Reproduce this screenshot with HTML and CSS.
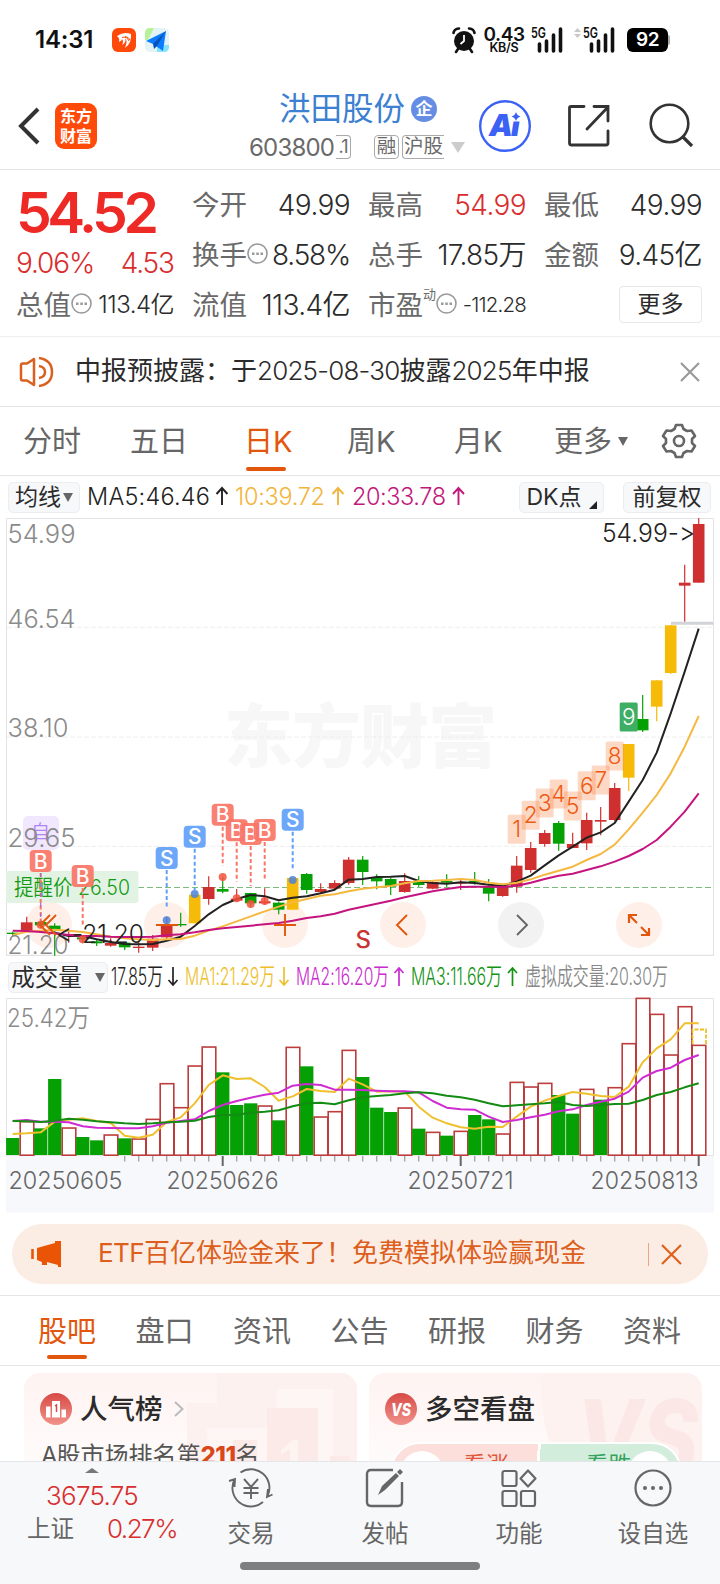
FILE: index.html
```html
<!DOCTYPE html>
<html lang="zh-CN">
<head>
<meta charset="utf-8">
<title>洪田股份 603800</title>
<link rel="stylesheet" href="styles.css">
</head>
<body>
<div class="app">
<main class="page">
  <header class="status">
    <span class="clock">14:31</span>
    <svg class="app-badge" width="24" height="24" viewBox="0 0 24 24"><rect width="24" height="24" rx="6" fill="#ff4a0a"/><path d="M5 8Q12 3 19 6Q20 15 13 20Q16 12 13 10Q15 14 10 17Q12 13 10 11Q10 13 7 14Q8 10 5 8Z" fill="#fff"/><path d="M10 9.500Q15 8 17 13M13 8.500Q17 9 18 12" stroke="#ff4a0a" fill="none"/></svg>
    <svg class="plane" width="24" height="24" viewBox="0 0 24 24"><rect width="24" height="24" rx="5" fill="#e4f3f5"/><path d="M5 0H9L3 12H0V5Q0 0 5 0Z" fill="#b7f29a"/><path d="M12 17H24V19Q24 24 19 24H12Z" fill="#86e3ff"/><path d="M21 3L1 13L8 16L18 23Z" fill="#0a7dff"/><path d="M21 3L8 16L9 21L12 18Z" fill="#0551bb"/></svg>
    <span class="status-right">
      <svg class="alarm" width="24" height="26" viewBox="0 0 24 26"><circle cx="12" cy="14" r="10" fill="#111"/><path d="M1.500 6Q2 2 7 1.500M22.500 6Q22 2 17 1.500M6 22L4 25M18 22L20 25" stroke="#111" stroke-width="2.600" fill="none" stroke-linecap="round"/><path d="M12 8V14L8.500 17" stroke="#fff" stroke-width="1.800" fill="none"/></svg>
      <span class="speed"><b>0.43</b><i>KB/S</i></span>
      <svg class="signal" width="32" height="26" viewBox="0 0 32 26"><text x="0" y="11" class="g5" textLength="15" lengthAdjust="spacingAndGlyphs">5G</text><path d="M8.500 17V24M15.500 14V24M22.500 8V24M29.500 2V24" stroke="#111" stroke-width="3.600" stroke-linecap="round"/></svg>
      <svg class="signal two" width="42" height="26" viewBox="-10 0 42 26"><path d="M-9 5L-5.500 1L-2 5ZM-9 7L-5.500 11L-2 7Z" fill="#c8c8c8"/><text x="0" y="11" class="g5" textLength="15" lengthAdjust="spacingAndGlyphs">5G</text><path d="M8.500 17V24M15.500 14V24M22.500 8V24M29.500 2V24" stroke="#111" stroke-width="3.600" stroke-linecap="round"/></svg>
      <span class="battery">92</span><span class="battery-tip"></span>
    </span>
  </header>

  <nav class="head">
    <svg class="back" width="22" height="38" viewBox="0 0 22 38"><path d="M20 2L3 19L20 36" fill="none" stroke="#333" stroke-width="4"/></svg>
    <div class="logo"><span>东方</span><span>财富</span></div>
    <div class="title">
      <div class="name">洪田股份<span class="corp">企</span></div>
      <div class="code"><span class="num">603800</span><span class="tag tag-r">.1</span><span class="tag rong">融</span><span class="tag hu">沪股</span><svg width="14" height="11" viewBox="0 0 14 11"><path d="M0 0H14L7 11Z" fill="#ccc"/></svg></div>
    </div>
    <svg class="ai" width="52" height="52" viewBox="0 0 52 52"><circle cx="26" cy="26" r="24.800" fill="none" stroke="#3b62f5" stroke-width="2.400"/><text x="10" y="36" class="ai-text" textLength="31">Ai</text><path d="M31 10H44V21.500H31Z" fill="#fff"/><path d="M37 12Q38 15.500 41.500 16.500Q38 17.500 37 21Q36 17.500 32.500 16.500Q36 15.500 37 12Z" fill="#3b62f5"/></svg>
    <svg class="share" width="44" height="44" viewBox="0 0 44 44"><path d="M17 2.500H4Q2.500 2.500 2.500 4V39Q2.500 41 4.500 41H39Q41 41 41 39V27M27 2.500H41V17M41 3L20 25" fill="none" stroke="#333" stroke-width="2.800" stroke-linecap="round"/></svg>
    <svg class="search" width="45" height="45" viewBox="0 0 45 45"><circle cx="20.500" cy="20.500" r="18.800" fill="none" stroke="#333" stroke-width="2.600"/><path d="M33.500 33.500L43 43" stroke="#333" stroke-width="3.200"/></svg>
  </nav>

  <section class="quote">
    <div class="left">
      <div class="price">54.52</div>
      <div class="chg"><span>9.06%</span><span>4.53</span></div>
      <div class="cell small"><label>总值</label><svg class="dots" viewBox="0 0 21 21"><use href="#more"/></svg><b>113.4亿</b></div>
    </div>
    <div class="grid">
      <div class="cell"><label>今开</label><b>49.99</b></div>
      <div class="cell"><label>最高</label><b class="red">54.99</b></div>
      <div class="cell"><label>最低</label><b>49.99</b></div>
      <div class="cell"><label>换手</label><svg class="dots" viewBox="0 0 21 21"><g id="more"><circle cx="10.500" cy="10.500" r="9.500" fill="none" stroke="#999" stroke-width="1.600"/><path d="M5 9.500H7.500V12H5ZM9.300 9.500H11.800V12H9.300ZM13.500 9.500H16V12H13.500Z" fill="#999"/></g></svg><b class="tight">8.58%</b></div>
      <div class="cell"><label>总手</label><b>17.85万</b></div>
      <div class="cell"><label>金额</label><b>9.45亿</b></div>
      <div class="cell"><label>流值</label><b>113.4亿</b></div>
      <div class="cell pe"><label>市盈<sup>动</sup></label><svg class="dots" viewBox="0 0 21 21"><use href="#more"/></svg><b>-112.28</b></div>
      <div class="cell end"><span class="more-btn">更多</span></div>
    </div>
  </section>

  <section class="notice">
    <svg width="36" height="30" viewBox="0 0 36 30"><path d="M2 8Q2 6.500 4 6.500H8L15 2V28L8 23.500H4Q2 23.500 2 22ZM20 1Q33 3 33 15Q33 27 20 29M20 9Q26 10 26 15Q26 20 20 21" fill="none" stroke="#d9601f" stroke-width="2.500" stroke-linejoin="round"/></svg>
    <p>中报预披露：于<span>2025-08-30</span>披露<span>2025</span>年中报</p>
    <svg class="close" width="20" height="20" viewBox="0 0 20 20"><path d="M1 1L19 19M19 1L1 19" stroke="#999" stroke-width="2.200"/></svg>
  </section>

  <nav class="periods">
    <span>分时</span><span>五日</span><span class="on">日K</span><span>周K</span><span>月K</span><span class="pmore">更多<svg width="10" height="9" viewBox="0 0 10 9"><path d="M0 0H10L5 9Z" fill="#666"/></svg></span>
    <svg class="gear" width="36" height="36" viewBox="0 0 36 36"><path d="M15 2H21L22.500 6L26 8L30.500 7.500L34 13L31 16V20L34 23L30.500 28.500L26 28L22.500 30L21 34H15L13.500 30L10 28L5.500 28.500L2 23L5 20V16L2 13L5.500 7.500L10 8L13.500 6Z" fill="none" stroke="#666" stroke-width="2.600" stroke-linejoin="round"/><circle cx="18" cy="18" r="5" fill="none" stroke="#666" stroke-width="2.600"/></svg>
  </nav>

  <div class="ma-row">
    <span class="chip avg">均线<svg width="10" height="9" viewBox="0 0 10 9"><path d="M0 0H10L5 9Z" fill="#666"/></svg></span>
    <svg class="ma-text" width="390" height="36" viewBox="84 479 390 36"><text x="87" y="505" textLength="123" fill="#222">MA5:46.46</text><text x="235" y="505" textLength="90" fill="#f2b43c">10:39.72</text><text x="352" y="505" textLength="94" fill="#c2187c">20:33.78</text><g fill="none" stroke-width="1.900"><path stroke="#222" d="M222 505V488M216.500 494L222 488L227.500 494"/><path stroke="#f2b43c" d="M338 505V488M332.500 494L338 488L343.500 494"/><path stroke="#c2187c" d="M458.500 505V488M453 494L458.500 488L464 494"/></g></svg>
    <span class="chip dk">DK点<svg width="8" height="8" viewBox="0 0 8 8"><path d="M8 0V8H0Z" fill="#222"/></svg></span>
    <span class="chip fq">前复权</span>
  </div>

  <svg id="kline" class="plot" width="720" height="438" viewBox="0 518 720 438"></svg>

  <div class="vol-row">
    <span class="chip">成交量<svg width="10" height="9" viewBox="0 0 10 9"><path d="M0 0H10L5 9Z" fill="#666"/></svg></span>
    <svg class="vol-text" width="608" height="36" viewBox="108 960 608 36"><text x="111" y="986" textLength="52" lengthAdjust="spacingAndGlyphs" fill="#222">17.85万</text><text x="185" y="986" textLength="90" lengthAdjust="spacingAndGlyphs" fill="#edc02a">MA1:21.29万</text><text x="296" y="986" textLength="93" lengthAdjust="spacingAndGlyphs" fill="#c92bd0">MA2:16.20万</text><text x="411" y="986" textLength="91" lengthAdjust="spacingAndGlyphs" fill="#149314">MA3:11.66万</text><text x="525" y="986" textLength="143" lengthAdjust="spacingAndGlyphs" fill="#888">虚拟成交量:20.30万</text><g fill="none" stroke-width="1.700"><path stroke="#222" d="M173 968V986M168.500 981L173 986L177.500 981"/><path stroke="#edc02a" d="M284 968V986M279.500 981L284 986L288.500 981"/><path stroke="#c92bd0" d="M399 987V969M394.500 974L399 969L403.500 974"/><path stroke="#149314" d="M512.500 987V969M508 974L512.500 969L517 974"/></g></svg>
  </div>

  <svg id="volume" class="plot" width="720" height="215" viewBox="0 998 720 215"></svg>

  <section class="promo">
    <svg width="32" height="28" viewBox="0 0 32 28"><path d="M2.500 9V19" stroke="#e95405" stroke-width="2.600"/><path d="M7 8L25 3V1H31V27H28V25L17 22V25H12V22L7 20Z" fill="#e95405"/></svg>
    <p><span>ETF</span>百亿体验金来了！免费模拟体验赢现金</p>
    <i></i>
    <svg class="close" width="21" height="21" viewBox="0 0 21 21"><path d="M1 1L20 20M20 1L1 20" stroke="#e0611c" stroke-width="2.200"/></svg>
  </section>

  <nav class="subtabs"><span class="on">股吧</span><span>盘口</span><span>资讯</span><span>公告</span><span>研报</span><span>财务</span><span>资料</span></nav>

  <section class="cards">
    <article class="card">
      <svg class="deco" width="170" height="92" viewBox="0 0 170 92"><path d="M30 0H170V92H146V16H90V55H20V92H0V30H30Z" fill="#fdf1ef"/><path d="M90 16H146V92H20V55H90Z" fill="#fef6f4"/><path d="M80 35H131V92H80ZM46 67H70V92H46ZM143 83H163V92H143Z" fill="#fceae8"/><path d="M94 77L106 67H111V92H103V76L94 82Z" fill="#fdf3f1"/></svg>
      <div class="card-head"><svg width="32" height="32" viewBox="0 0 32 32"><circle cx="16" cy="16" r="16" fill="url(#rg)"/><defs><linearGradient id="rg" x2="0" y2="1"><stop stop-color="#d84a46"/><stop offset="1" stop-color="#f0938b"/></linearGradient></defs><path d="M12 8H20V24.500H12ZM6 13.500H10.500V24.500H6ZM21.500 16.500H26V24.500H21.500Z" fill="#fff"/><path d="M15 13L16.500 12V19" stroke="#d84a46" stroke-width="1.500" fill="none"/></svg><h3>人气榜</h3><svg class="chev" width="10" height="16" viewBox="0 0 10 16"><path d="M1 1L8.500 8L1 15" fill="none" stroke="#bbb" stroke-width="2"/></svg></div>
      <p class="rank"><span>A</span>股市场排名第<b>211</b>名</p>
    </article>
    <article class="card">
      <svg class="deco" width="170" height="92" viewBox="0 0 170 92"><path d="M8 0H170V92H25Q10 60 8 0Z" fill="#fdf2f0"/><text x="44" y="102" textLength="122" lengthAdjust="spacingAndGlyphs" class="deco-vs">VS</text></svg>
      <div class="card-head"><svg width="32" height="32" viewBox="0 0 32 32"><circle cx="16" cy="16" r="16" fill="url(#rg)"/><text x="6" y="22.500" textLength="20" lengthAdjust="spacingAndGlyphs" class="vs">VS</text></svg><h3>多空看盘</h3></div>
      <div class="pill"><span class="up">看涨</span><span class="down">看跌</span></div>
    </article>
  </section>
</main>

<footer class="bar">
  <div class="index">
    <svg width="14" height="5" viewBox="0 0 14 5"><path d="M0 5L7 0L14 5Z" fill="#777"/></svg>
    <strong>3675.75</strong>
    <div><span>上证</span><b>0.27%</b></div>
  </div>
  <div class="item"><svg width="44" height="40" viewBox="0 0 44 40"><path d="M11.500 4.500A18.500 18.500 0 0 1 38.500 28M34 34A18.500 18.500 0 0 1 5.500 11.500M0 13L6 11L5.500 19M43.500 26.500L38 29L39 21M15 11L22 19L29 11M22 19V31M14.500 20H29.500M14.500 25H29.500" fill="none" stroke="#666" stroke-width="1.900"/></svg><span>交易</span></div>
  <div class="item"><svg width="40" height="40" viewBox="0 0 40 40"><path d="M28 2H6Q2 2 2 6V34Q2 38 6 38H33Q37 38 37 34V14" fill="none" stroke="#666" stroke-width="2.400"/><path d="M13 27L17 18L31 5L34 8L20 22ZM32 4L35 1L38 4L35 7Z" fill="#666"/></svg><span>发帖</span></div>
  <div class="item"><svg width="36" height="38" viewBox="0 0 36 38"><g fill="none" stroke="#666" stroke-width="2.200"><rect x="1.500" y="2" width="14" height="15" rx="2"/><rect x="1.500" y="22" width="14" height="15" rx="2"/><rect x="20" y="22" width="14" height="15" rx="2"/><path d="M27 1.500L34.500 9.500L27 17.500L19.500 9.500Z" stroke-linejoin="round"/></g></svg><span>功能</span></div>
  <div class="item"><svg width="38" height="38" viewBox="0 0 38 38"><circle cx="19" cy="19" r="17.500" fill="none" stroke="#666" stroke-width="2.200"/><g fill="#666"><circle cx="11" cy="19" r="2"/><circle cx="19" cy="19" r="2"/><circle cx="27" cy="19" r="2"/></g></svg><span>设自选</span></div>
  <i class="home"></i>
</footer>
</div>
<script src="chart.js"></script>
</body>
</html>
```
FILE: styles.css
```css
* { box-sizing: border-box; }
body { margin: 0; background: #fff; color: #2b2b2b; font-family: Inter, "Noto Sans CJK SC", sans-serif; font-feature-settings: "calt" 0; }
b, i, strong { font-weight: 400; font-style: normal; }
p, h3 { margin: 0; }
svg { display: block; flex: none; overflow: visible; }
.app { width: 720px; height: 1584px; overflow: hidden; display: flex; flex-direction: column; }
.page { height: 1461px; overflow: hidden; }

.status { height: 80px; padding: 0 50px 0 35px; display: flex; align-items: center; color: #111; }
.clock { font-size: 24px; font-weight: 600; width: 77px; letter-spacing: -0.2px; line-height: 80px; }
.plane { margin-left: 9px; }
.status-right { margin-left: auto; display: flex; align-items: center; }
.speed { display: flex; flex-direction: column; align-items: center; width: 40px; margin: 0 7px 0 8px; }
.speed b { font-size: 19px; line-height: 15px; font-weight: 600; letter-spacing: -0.4px; }
.speed i { font-size: 12.500px; line-height: 11px; font-weight: 600; letter-spacing: -0.2px; }
.g5 { font-size: 14.500px; font-weight: 600; fill: #111; }
.signal.two { margin-left: 10px; }
.battery { margin-left: 12px; width: 41px; height: 24px; border-radius: 6px; background: #000; color: #fff; font-size: 19px; font-weight: 600; letter-spacing: -0.5px; line-height: 24px; text-align: center; }
.battery-tip { width: 2px; height: 10px; background: #aaa; border-radius: 0 2px 2px 0; }

.head { height: 90px; border-bottom: 1px solid #e2e2e2; display: flex; align-items: center; padding: 2px 26px 0 18px; }
.logo { margin-left: 15px; width: 45px; height: 46px; border-radius: 9px; background: #ff4a0a; color: #fff; font-size: 16px; line-height: 20px; font-weight: 700; display: flex; flex-direction: column; align-items: center; justify-content: center; }
.title { width: 219px; margin-left: 152px; padding-top: 5px; }
.name { display: flex; align-items: center; margin-left: 30px; font-size: 31.500px; line-height: 38px; color: #3d7fd0; }
.corp { margin-left: 6px; width: 26px; height: 26px; border-radius: 50%; background: #658de3; color: #fff; font-size: 17px; line-height: 26px; text-align: center; font-weight: 700; }
.code { display: flex; align-items: center; height: 38px; color: #6a6a6a; }
.num { font-size: 24px; letter-spacing: -0.8px; width: 87px; }
.tag { font-size: 19.500px; line-height: 21px; height: 24px; border: 1px solid #aaa; border-radius: 4px; text-align: center; }
.tag-r { width: 15px; border-left: 0; font-size: 18px; letter-spacing: -1px; border-radius: 0 4px 4px 0; }
.rong { margin-left: 23px; width: 25px; }
.hu { margin: 0 7px 0 3px; width: 42px; border-right: 0; border-radius: 4px 0 0 4px; }
.ai { margin-left: 14px; }
.ai-text { font-size: 30px; font-weight: 900; fill: #3b62f5; font-style: italic; }
.share { margin-left: 36px; }
.search { margin-left: 38px; }

.quote { display: flex; gap: 18px; height: 167px; padding: 10px 18px 0 16px; border-bottom: 1px solid #eee; }
.left { width: 158px; }
.price { height: 64px; line-height: 66px; font-size: 57px; font-weight: 600; letter-spacing: -4.500px; color: #ee2a26; white-space: nowrap; }
.chg { height: 36px; line-height: 38px; font-size: 28px; font-weight: 350; letter-spacing: -1.100px; color: #d92e2e; display: flex; justify-content: space-between; }
.grid { display: grid; grid-template-columns: repeat(3, 158px); grid-auto-rows: 50px; column-gap: 18px; }
.cell { display: flex; align-items: center; height: 50px; white-space: nowrap; font-size: 27.500px; line-height: 50px; }
.cell label { color: #6a6a6a; }
.cell b { margin-left: auto; letter-spacing: -0.6px; font-size: 28px; font-weight: 350; }
.cell .tight { letter-spacing: -1.200px; }
.cell .red { color: #d92e2e; }
.cell.small b { font-size: 24px; letter-spacing: -0.5px; }
.cell.pe b { font-size: 20.500px; letter-spacing: -0.8px; }
.dots { width: 21px; height: 21px; margin-top: -4px; }
.cell sup { font-size: 13px; line-height: 13px; vertical-align: 16px; }
.end { justify-content: flex-end; }
.more-btn { width: 83px; height: 37px; margin-top: -2px; border: 1.500px solid #e8e8e8; border-radius: 4px; line-height: 34px; text-align: center; font-size: 23px; }

.notice { height: 70px; border-bottom: 1px solid #e2e2e2; display: flex; align-items: center; padding: 0 20px 0 19px; }
.notice p { margin: -1px 0 0 20px; font-size: 26px; line-height: 34px; white-space: nowrap; }
.notice p span { letter-spacing: -0.8px; font-weight: 350; }
.notice .close, .promo .close { margin-left: auto; }

.periods { height: 69px; border-bottom: 1px solid #e5e5e5; display: grid; grid-template-columns: 107px 104px 109px 104px 107px 107px 36px; padding-left: 23px; align-items: center; font-size: 29px; color: #666; }
.periods span { height: 68px; line-height: 69px; white-space: nowrap; }
.periods .on, .subtabs .on { color: #e2570d; position: relative; }
.periods .on::after { content: ""; position: absolute; left: 12px; bottom: 4px; width: 40px; height: 4px; border-radius: 2px; background: #e2570d; }
.periods .on { text-indent: 10px; }
.periods span:nth-child(4) { text-indent: 4px; }
.periods span:nth-child(5) { text-indent: 7px; }
.pmore { display: flex; align-items: center; gap: 6px; }

.ma-row, .vol-row { display: flex; align-items: center; padding-left: 8px; }
.ma-row { height: 42px; }
.ma-text { margin-left: 4px; font-size: 23.500px; font-weight: 350; }
.chip { display: flex; align-items: center; justify-content: center; height: 31px; border-radius: 5px; border: 1px solid #ebedf1; background: #f7f8fa; font-size: 23px; white-space: nowrap; line-height: 29px; }
.avg { width: 72px; gap: 2px; }
.dk { width: 85px; margin-left: 45px; gap: 7px; }
.dk svg { margin-top: 15px; }
.fq { width: 88px; margin-left: 19px; }
.vol-row { height: 42px; }
.vol-row .chip { width: 100px; gap: 13px; font-size: 23.500px; }
.vol-text { font-size: 24px; font-weight: 350; }
.plot { font-size: 26px; font-weight: 350; }

.promo { height: 60px; margin: 11px 12px; padding: 0 26px 0 18px; border-radius: 30px; background: #fcede4; color: #dc5f1e; display: flex; align-items: center; }
.promo p { font-size: 26px; line-height: 34px; margin: -3px 0 0 36px; white-space: nowrap; }
.promo p span { letter-spacing: -0.6px; }
.promo i { width: 1px; height: 23px; background: #eba582; margin-left: auto; }
.promo .close { margin-left: 12px; }
.subtabs { height: 71px; border-top: 1px solid #e5e5e5; border-bottom: 1px solid #e5e5e5; display: flex; justify-content: space-between; padding: 0 39px 0 38px; font-size: 29px; line-height: 72px; color: #666; }
.subtabs .on::after { content: ""; position: absolute; left: 9px; top: 59px; width: 40px; height: 4px; border-radius: 2px; background: #e2570d; }

.cards { display: flex; gap: 12px; padding: 7px 18px 0 24px; }
.card { width: 333px; height: 130px; border-radius: 16px; background: linear-gradient(#fef3f1, #fffafa 60%); position: relative; overflow: hidden; }
.deco { position: absolute; right: 0; top: 0; }
.deco-vs { font-size: 104px; font-weight: 800; font-style: italic; fill: #fbe8e6; }
.vs { font-size: 17px; font-weight: 800; font-style: italic; fill: #fff; }
.card-head { position: relative; display: flex; align-items: center; height: 32px; margin: 20px 16px 0; }
.card h3 { font-size: 27.500px; line-height: 32px; font-weight: 500; margin-left: 8px; }
.chev { margin-left: 11px; }
.rank { position: relative; margin: 14px 0 0 17px; font-size: 24px; line-height: 34px; color: #555; white-space: nowrap; }
.rank span { letter-spacing: -1px; }
.rank b { font-weight: 800; color: #d9481a; letter-spacing: -0.5px; }
.pill { position: relative; display: flex; width: 292px; height: 60px; margin: 17px 0 0 21px; border: 2px solid #fff; border-radius: 30px; overflow: hidden; background: linear-gradient(94deg, #fcdeda 50%, #fff 50%, #fff 51%, #d3eddd 51%); font-size: 23px; }
.pill span { line-height: 42px; flex: 1; }
.pill .up { color: #e2573c; padding-left: 71px; }
.pill .down { color: #35a35d; padding-left: 28px; }
.pill::before, .pill::after { content: ""; position: absolute; top: 7px; width: 44px; height: 44px; border-radius: 50%; background: #fff; }
.pill::before { left: 8px; }
.pill::after { right: 8px; }

.bar { position: relative; height: 123px; border-top: 1px solid #e4e6e9; background: #f7f8fa; color: #666; display: grid; grid-template-columns: 184px repeat(4, 134px); font-size: 23.500px; }
.index { display: flex; flex-direction: column; align-items: center; padding-top: 6px; }
.index strong { margin-top: 5px; font-size: 26px; line-height: 36px; letter-spacing: -0.7px; font-weight: 350; color: #d92e2e; }
.index div { width: 150px; margin: -1px 0 0; display: flex; justify-content: space-between; align-items: center; line-height: 32px; transform: translateX(10px); }
.index div b { color: #d92e2e; font-size: 26px; letter-spacing: -1.500px; font-weight: 350; }
.item { display: flex; flex-direction: column; align-items: center; padding-top: 6px; }
.item svg { height: 40px; }
.item span { line-height: 30px; margin-top: 11px; }
.home { position: absolute; left: 240px; bottom: 14px; width: 240px; height: 8px; border-radius: 4px; background: #7e7f81; }
```
FILE: chart.js
```js
const RED = '#cf2f2f', GREEN = '#04a004', GOLD = '#f6ba08';
const COLORS = { r: RED, g: GREEN, y: GOLD };
const x = i => 12.7 + 14 * i;
const ky = v => 780 + v / 3;
const vy = v => 955 + v / 3;
const line = (vals, y, color, start = 0, w = 2) =>
  `<polyline fill="none" stroke="${color}" stroke-width="${w}" stroke-linejoin="round" points="${vals.map((v, i) => x(i + start) + ',' + y(v)).join(' ')}"/>`;
const label = (s, px, py, w, fill, extra = '') =>
  `<text x="${px}" y="${py}" textLength="${w}" lengthAdjust="spacingAndGlyphs" fill="${fill}" ${extra}>${s}</text>`;

// colour, body top, body bottom, high, low
const candles = `g 458 462 455 468|r 427 452 410 455|g 426 436 418 445|g 437 449 430 527|r 462 468 450 488|g 472 478 465 490|g 484 490 478 498|r 488 497 475 500|g 488 502 485 510|r 500 504 485 518|r 476 503 465 513|r 432 472 410 480|g 432 436 398 440|y 344 430 344 430|r 321 357 289 374|g 327 335 292 340|r 356 362 327 364|g 339 370 338 380|r 364 370 325 374|g 368 389 365 403|y 294 389 294 389|g 282 330 279 341|r 327 336 310 340|r 309 326 301 330|r 239 309 231 314|g 239 276 228 315|g 291 304 283 328|g 297 320 293 345|r 303 336 280 338|g 304 315 288 320|r 306 326 304 328|g 303 308 283 321|r 308 311 295 330|g 303 307 276 314|g 320 341 297 364|r 316 348 316 350|r 257 320 228 338|r 204 270 186 278|r 159 192 150 200|g 129 191 123 212|r 192 204 158 205|r 120 190 98 210|r 120 125 81 166|r 24 120 9 124|y -108 -7 -108 33|g -183 -149 -255 -144|y -299 -220 -299 -176|y -464 -321 -465 -318|r -592 -583 -646 -475|r -768 -592 -786 -592`.split('|').map(s => s.split(' '));
const ma5 = [458, 468, 468, 478, 486, 492, 493, 492, 482, 470, 438, 403, 375, 357, 345, 349, 361, 353, 349, 340, 329, 299, 297, 291, 290, 288, 303, 309, 311, 307, 309, 314, 317, 305, 287, 256, 226, 200, 173, 157, 129, 65, 0, -82, -200, -325, -454];
const ma10 = [465, 455, 452, 449, 452, 456, 463, 470, 475, 478, 480, 478, 477, 467, 452, 439, 424, 409, 394, 380, 367, 357, 347, 343, 334, 326, 322, 318, 310, 303, 302, 300, 297, 300, 308, 313, 308, 298, 284, 272, 260, 240, 222, 194, 148, 98, 45, -20, -100, -192];
const ma20 = [452, 453, 456, 460, 465, 468, 468, 470, 471, 471, 470, 466, 463, 457, 450, 445, 441, 437, 433, 429, 422, 414, 409, 401, 389, 380, 371, 362, 352, 343, 334, 327, 321, 320, 320, 321, 317, 308, 297, 287, 281, 270, 259, 245, 228, 207, 180, 140, 95, 40];

let k = '<text x="224" y="762" textLength="273" font-size="69" font-weight="900" fill="#f7f7f7">东方财富</text>';
[627.3, 737, 846.3].forEach(y => { k += `<path d="M7 ${y}H713" stroke="#eee" stroke-dasharray="5 2"/>`; });
k += `<path d="M6.500 955V518.500H713.500V955" fill="none" stroke="#e3e3e6"/><path d="M6 955.300H714" stroke="#dcdcdc"/>`;
k += '<path d="M138 887.500H712" stroke="#7dbb7d" stroke-width="1.200" stroke-dasharray="6 3"/>';
k += '<rect x="6" y="871" width="132.500" height="32" rx="3" fill="#e3f3e3"/>' + label('提醒价 26.50', 14, 894.5, 116, '#149a14', 'font-size="21.500"');
[49, 167, 285, 403, 521, 639].forEach(cx => { k += `<circle cx="${cx}" cy="925" r="23" fill="${cx === 521 ? '#f2f2f2' : '#fef0e8'}"/>`; });
k += '<rect x="23" y="816" width="36" height="34" rx="5" fill="#f1e8ff"/><text x="31" y="839" font-size="19" fill="#b184f5">自</text>';
candles.forEach(([c, t, b, h, l], i) => {
  const f = COLORS[c];
  k += `<path d="M${x(i)} ${ky(+h)}V${ky(+l)}" stroke="${f}" stroke-width="1.200"/><rect x="${x(i) - 5.8}" y="${ky(+t)}" width="11.600" height="${(b - t) / 3}" fill="${f}"/>`;
});
k += line(ma5, ky, '#222', 3) + line(ma10, ky, '#f5b840') + line(ma20, ky, '#c5147f');
k += '<path d="M671 623.300H713" stroke="#d0d4d9" stroke-width="3"/>';

// trade markers: letter, candle index, badge centre, line end, dot
[['B', 2, 243, 425, 434], ['B', 5, 288, 440, 478], ['S', 11, 234, 383, 421], ['S', 13, 170, 330, 342], ['B', 15, 104, 258, 291], ['B', 16, 151, 305, 355], ['B', 17, 162, 318, 372], ['B', 18, 150, 303, 363], ['S', 20, 119, 270, 300]].forEach(([s, i, c, e, d]) => {
  const buy = s === 'B', f = buy ? '#fa7565' : '#5f9ff8', cx = x(i), cy = ky(c);
  k += `<path d="M${cx} ${cy + 12}V${ky(e)}" stroke="${f}" stroke-width="2" stroke-dasharray="4 2.500"/><circle cx="${cx}" cy="${ky(d)}" r="4" fill="${buy ? '#f4513c' : '#4a82dc'}" opacity="0.85"/><rect x="${cx - 11}" y="${cy - 11}" width="22" height="22" rx="4" fill="${f}" opacity="0.92"/><text x="${cx}" y="${cy + 7.5}" font-size="21" font-weight="500" text-anchor="middle" fill="#fff">${s}</text>`;
});
k += `<path d="M40.700 873V918" stroke="#9c6be8" stroke-width="1.200" stroke-dasharray="4 6"/>`;

// consecutive-rise counters
[[516.7, 829.3], [530.7, 815.3], [544.7, 803], [558.7, 794], [572.7, 806], [586.7, 785.7], [600.7, 780], [614.7, 756], [628.7, 717]].forEach(([cx, cy], i) => {
  const last = i === 8;
  k += `<rect x="${cx - 9}" y="${cy - 14.5}" width="18" height="29" rx="1.500" fill="${last ? '#3fae65' : '#fa7d3c'}" opacity="${last ? 1 : 0.3}"/><text x="${cx}" y="${cy + 8}" font-size="22.500" text-anchor="middle" fill="${last ? '#fff' : '#ee5a12'}">${i + 1}</text>`;
});

[['54.99', 543], ['46.54', 628], ['38.10', 737], ['29.65', 847], ['21.20', 954]].forEach(([s, y]) => { k += label(s, 7.5, y, s === '38.10' || s === '21.20' ? 61 : 68, '#8b8b8b'); });
k += label('&lt;-21.20', 56, 943, 88, '#222') + label('54.99-&gt;', 602, 542, 93, '#222');
k += '<text x="355.500" y="948" font-size="24" font-weight="500" fill="#c93434">S</text>';
k += '<g fill="none" stroke="#e2570d" stroke-width="1.900"><path d="M50 915L40 925L50 935M56 915L46 925L56 935M156 925H178M274 925H296M285 914V936M407 915L397 925L407 935"/><path stroke="#666" d="M517 915L527 925L517 935"/><path stroke-width="2.200" d="M629 923V915H637M629 915L637 923M649 928V935H641M649 935L641 927"/></g>';
document.getElementById('kline').innerHTML = k;

const vols = 'g549 r498 g520 g372 r517 g546 g556 r538 g550 r550 r491 r384 r456 r331 r274 g352 g450 g445 r451 g496 r275 g334 r484 r468 r284 g366 g458 g471 r457 g521 r530 g542 r527 g480 g493 r535 r380 r394 r383 g420 g476 r401 g434 r396 r264 r128 r176 r298 r153 r269'.split(' ');
const v1 = [537, 535, 532, 500, 494, 490, 498, 504, 542, 548, 539, 501, 487, 445, 390, 361, 372, 370, 396, 437, 424, 402, 408, 411, 371, 388, 410, 409, 410, 455, 488, 505, 517, 521, 515, 516, 485, 455, 437, 423, 411, 416, 423, 426, 395, 322, 280, 253, 205, 205];
const v2 = [498, 495, 500, 500, 502, 514, 518, 519, 520, 520, 514, 503, 498, 493, 468, 450, 438, 428, 419, 413, 392, 387, 390, 404, 404, 405, 407, 409, 409, 412, 438, 458, 463, 464, 485, 501, 495, 487, 479, 469, 463, 450, 440, 431, 410, 368, 348, 338, 315, 300];
const v3 = [498, 499, 501, 497, 491, 494, 499, 502, 505, 507, 505, 502, 500, 497, 486, 480, 479, 473, 470, 466, 454, 445, 443, 448, 436, 427, 423, 420, 415, 412, 415, 422, 427, 434, 445, 454, 451, 448, 445, 441, 450, 453, 450, 447, 446, 435, 420, 411, 397, 385];
let g = '<rect x="6" y="1156" width="708" height="56.500" fill="#f7f8fb"/><path d="M6.500 1155V998.500H713.500V1155.500H6" fill="none" stroke="#e3e3e6"/>';
g += label('25.42万', 7, 1027, 83, '#8b8b8b', 'font-size="25"');
vols.forEach((s, i) => {
  const top = vy(+s.slice(1)), left = x(i) - 7;
  g += s[0] === 'g'
    ? `<rect x="${left + 0.4}" y="${top}" width="13.300" height="${1155 - top}" fill="${GREEN}"/>`
    : `<rect x="${left + 0.5}" y="${top + 0.7}" width="13.600" height="${1154.5 - top}" fill="#fff" stroke="#bd3c3c" stroke-width="1.600"/>`;
  if (i > 7) {
    const major = i === 15 || i === 32 || i === 49;
    g += `<path d="M${x(i)} 1156V${major ? 1166 : 1161.5}" stroke="${major ? '#666' : '#a5a5a5'}" stroke-width="${major ? 2 : 1.4}"/>`;
  }
});
g += '<path d="M692.500 1044V1029.500H706V1044" fill="none" stroke="#edc02a" stroke-width="1.800" stroke-dasharray="4 1.500"/>';
g += line(v1, vy, '#efc02e', 0, 2) + line(v2, vy, '#cf2bd2', 0, 2) + line(v3, vy, '#148c14', 0, 2);
g += [['20250605', 8.5, 114], ['20250626', 166.5, 112], ['20250721', 407.5, 106], ['20250813', 590.5, 108]].map(([s, px, w]) => label(s, px, 1188.5, w, '#666', 'font-size="24.500"')).join('');
document.getElementById('volume').innerHTML = g;
```
